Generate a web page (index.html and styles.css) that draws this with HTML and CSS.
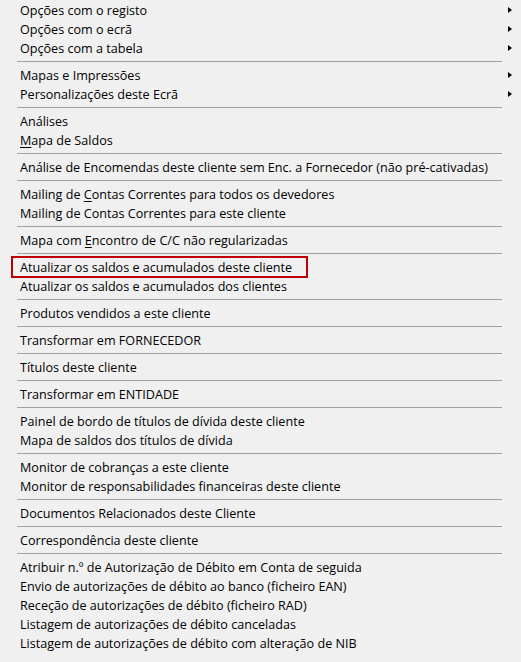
FILE: index.html
```html
<!DOCTYPE html>
<html lang="pt">
<head>
<meta charset="utf-8">
<title>Menu</title>
<link rel="stylesheet" href="styles.css">
</head>
<body>
<div class="menu">
  <div class="item"><span class="label">Opções com o registo</span><span class="arrow"></span></div>
  <div class="item"><span class="label">Opções com o ecrã</span><span class="arrow"></span></div>
  <div class="item"><span class="label">Opções com a tabela</span><span class="arrow"></span></div>
  <div class="sep"></div>
  <div class="item"><span class="label">Mapas e Impressões</span><span class="arrow"></span></div>
  <div class="item"><span class="label">Personalizações deste Ecrã</span><span class="arrow"></span></div>
  <div class="sep"></div>
  <div class="item"><span class="label">Análises</span></div>
  <div class="item"><span class="label"><u>M</u>apa de Saldos</span></div>
  <div class="sep"></div>
  <div class="item"><span class="label">Análise de Encomendas deste cliente sem Enc. a Fornecedor (não pré-cativadas)</span></div>
  <div class="sep"></div>
  <div class="item"><span class="label">Mailing de <u>C</u>ontas Correntes para todos os devedores</span></div>
  <div class="item"><span class="label">Mailing de Contas Correntes para este cliente</span></div>
  <div class="sep"></div>
  <div class="item"><span class="label">Mapa com <u>E</u>ncontro de C/C não regularizadas</span></div>
  <div class="sep"></div>
  <div class="item boxed"><span class="label">Atualizar os saldos e acumulados deste cliente</span></div>
  <div class="item"><span class="label">Atualizar os saldos e acumulados dos clientes</span></div>
  <div class="sep"></div>
  <div class="item"><span class="label">Produtos vendidos a este cliente</span></div>
  <div class="sep"></div>
  <div class="item"><span class="label">Transformar em FORNECEDOR</span></div>
  <div class="sep"></div>
  <div class="item"><span class="label">Títulos deste cliente</span></div>
  <div class="sep"></div>
  <div class="item"><span class="label">Transformar em ENTIDADE</span></div>
  <div class="sep"></div>
  <div class="item"><span class="label">Painel de bordo de títulos de dívida deste cliente</span></div>
  <div class="item"><span class="label">Mapa de saldos dos títulos de dívida</span></div>
  <div class="sep"></div>
  <div class="item"><span class="label">Monitor de cobranças a este cliente</span></div>
  <div class="item"><span class="label">Monitor de responsabilidades financeiras deste cliente</span></div>
  <div class="sep"></div>
  <div class="item"><span class="label">Documentos Relacionados deste Cliente</span></div>
  <div class="sep"></div>
  <div class="item"><span class="label">Correspondência deste cliente</span></div>
  <div class="sep"></div>
  <div class="item"><span class="label">Atribuir n.º de Autorização de Débito em Conta de seguida</span></div>
  <div class="item"><span class="label">Envio de autorizações de débito ao banco (ficheiro EAN)</span></div>
  <div class="item"><span class="label">Receção de autorizações de débito (ficheiro RAD)</span></div>
  <div class="item"><span class="label">Listagem de autorizações de débito canceladas</span></div>
  <div class="item"><span class="label">Listagem de autorizações de débito com alteração de NIB</span></div>
</div>
</body>
</html>
```
FILE: styles.css
```css
html, body {
  margin: 0;
  padding: 0;
  background: #f0f0f0;
}
body {
  font-family: "Open Sans", "Noto Sans", "Liberation Sans", sans-serif;
  font-size: 12.6px;
  color: #000;
}
.menu {
  display: flex;
  flex-direction: column;
  width: 521px;
  height: 662px;
}
.item {
  position: relative;
  box-sizing: border-box;
  display: flex;
  align-items: center;
  height: 19px;
  padding: 2px 9px 0 20px;
  line-height: 17px;
  white-space: nowrap;
}
.label {
  flex: 1;
}
.label u {
  text-decoration-thickness: 1px;
  text-underline-offset: 2px;
}
.arrow {
  width: 0;
  height: 0;
  margin-top: -2px;
  border-top: 3.5px solid transparent;
  border-bottom: 3.5px solid transparent;
  border-left: 4px solid #000;
}
.sep {
  height: 1px;
  margin: 4px 19px 3px 17px;
  background: #a0a0a0;
}
.boxed::after {
  content: "";
  position: absolute;
  left: 11px;
  top: -1px;
  width: 293px;
  height: 18px;
  border: 2px solid #c00000;
}
```
